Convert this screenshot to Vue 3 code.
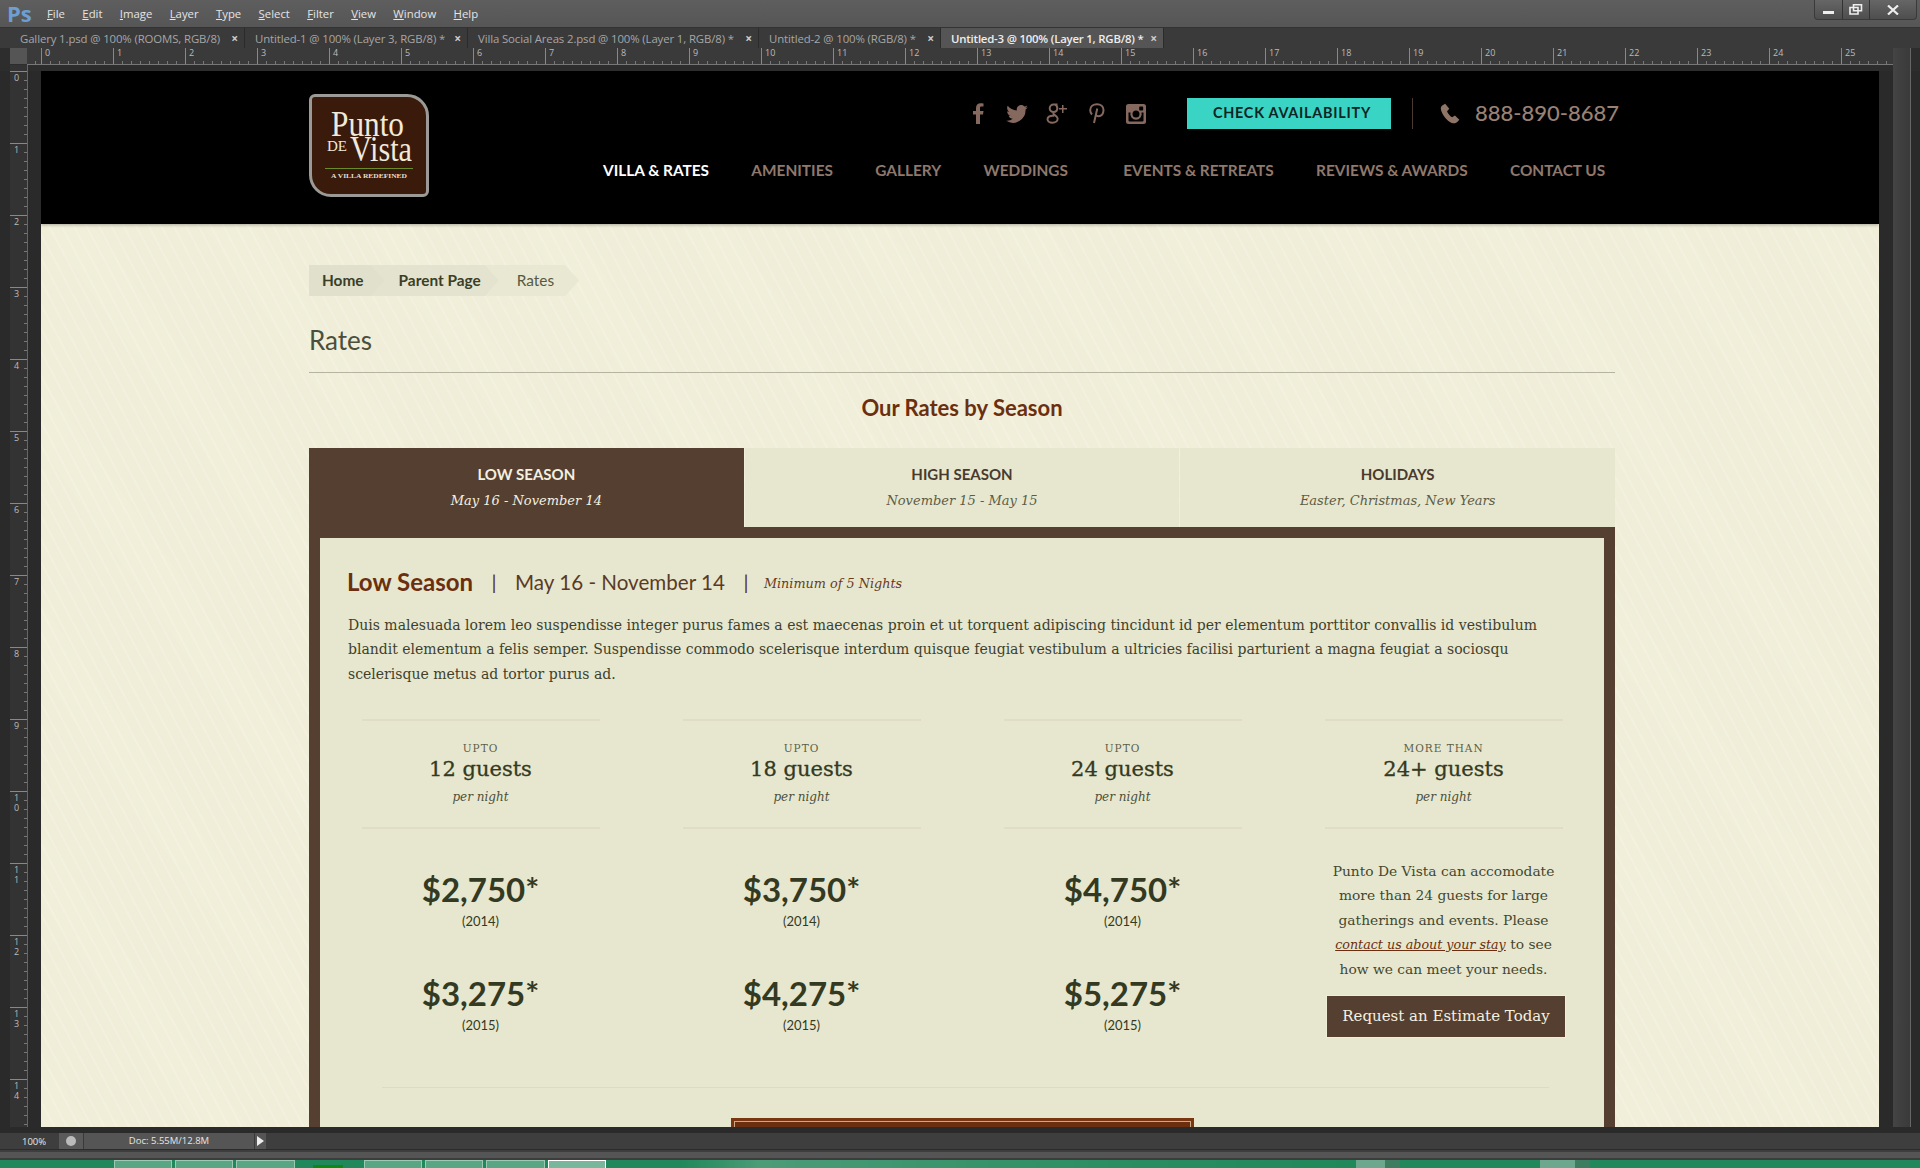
<script setup>
const menus = ['File', 'Edit', 'Image', 'Layer', 'Type', 'Select', 'Filter', 'View', 'Window', 'Help']
const docs = [
  { name: 'Gallery 1.psd @ 100% (ROOMS, RGB/8)', w: 235 },
  { name: 'Untitled-1 @ 100% (Layer 3, RGB/8) *', w: 223 },
  { name: 'Villa Social Areas 2.psd @ 100% (Layer 1, RGB/8) *', w: 291 },
  { name: 'Untitled-2 @ 100% (RGB/8) *', w: 182 },
  { name: 'Untitled-3 @ 100% (Layer 1, RGB/8) *', w: 223, active: true }
]
const hTicks = Array.from({ length: 26 }, (_, i) => String(i))
const vTicks = Array.from({ length: 15 }, (_, i) => String(i))

const nav = [
  { label: 'VILLA & RATES', active: true },
  { label: 'AMENITIES' },
  { label: 'GALLERY' },
  { label: 'WEDDINGS', wide: true },
  { label: 'EVENTS & RETREATS' },
  { label: 'REVIEWS & AWARDS' },
  { label: 'CONTACT US' }
]
const tabs = [
  { title: 'LOW SEASON', dates: 'May 16 - November 14', active: true },
  { title: 'HIGH SEASON', dates: 'November 15 - May 15' },
  { title: 'HOLIDAYS', dates: 'Easter, Christmas, New Years' }
]
const plans = [
  { pre: 'UPTO', guests: '12 guests', a: '$2,750*', b: '$3,275*' },
  { pre: 'UPTO', guests: '18 guests', a: '$3,750*', b: '$4,275*' },
  { pre: 'UPTO', guests: '24 guests', a: '$4,750*', b: '$5,275*' }
]
const taskButtons = [58, 58, 59, 0, 58, 58, 59, 58]
</script>

<template>
  <div class="ps">
    <div class="menubar">
      <span class="ps-logo">Ps</span>
      <nav class="menus">
        <span v-for="m in menus" :key="m"><u>{{ m[0] }}</u>{{ m.slice(1) }}</span>
      </nav>
      <div class="winbtns">
        <span class="wb wb-min"><i></i></span>
        <span class="wb wb-max">
          <svg width="14" height="11" viewBox="0 0 14 11"><path d="M4.500.8h8v6h-8zM1 3.500h8V10H1z" fill="none" stroke="#eee" stroke-width="1.600"/></svg>
        </span>
        <span class="wb wb-close">
          <svg width="12" height="10" viewBox="0 0 12 10"><path d="M1 .5l10 9M11 .5l-10 9" stroke="#eee" stroke-width="2.200"/></svg>
        </span>
      </div>
    </div>

    <div class="tabbar">
      <div v-for="d in docs" :key="d.name" class="doc" :class="{ active: d.active }" :style="{ width: d.w + 'px' }">
        <span>{{ d.name }}</span><b>×</b>
      </div>
    </div>

    <div class="rulerrow">
      <div class="corner"></div>
      <div class="hruler">
        <span class="hcell first"></span>
        <span v-for="t in hTicks" :key="t" class="hcell">{{ t }}</span>
      </div>
      <div class="scroll-top"></div>
    </div>

    <div class="workspace">
      <div class="vruler">
        <span v-for="t in vTicks" :key="t" class="vcell">
          <em v-for="c in t" :key="c">{{ c }}</em>
        </span>
      </div>
      <div class="canvas">
        <header class="site-head">
          <div class="wrap head-inner">
            <div class="logo">
              <svg width="114" height="97" viewBox="0 0 114 97">
                <text x="19" y="39" class="l-big" textLength="73" lengthAdjust="spacingAndGlyphs">Punto</text>
                <text x="15" y="54" class="l-de" textLength="20" lengthAdjust="spacingAndGlyphs">DE</text>
                <text x="38" y="64" class="l-big" textLength="62" lengthAdjust="spacingAndGlyphs">Vista</text>
                <rect x="13" y="71" width="88" height="1" fill="#6b8a2a" />
                <text x="19" y="81" class="l-tag" textLength="76" lengthAdjust="spacingAndGlyphs">A VILLA REDEFINED</text>
              </svg>
            </div>
            <div class="head-right">
              <div class="head-top">
                <div class="socials">
                  <svg width="11" height="21" viewBox="0 0 11 21"><path d="M3 21V11.500H0V8h3V5.200C3 2 4.800.3 7.600.3c1.200 0 2.400.1 2.900.2v3.100H8.600C7.200 3.600 7 4.300 7 5.300V8h3.500L10 11.500H7V21z" /></svg>
                  <svg class="tw" width="22" height="18" viewBox="0 0 24 20"><path d="M24 2.400c-.9.4-1.800.7-2.800.8 1-.6 1.800-1.600 2.200-2.700-1 .6-2 1-3.100 1.200A4.900 4.900 0 0 0 11.900 6.200C7.800 6 4.200 4 1.700.9c-1.300 2.200-.7 5.100 1.500 6.600-.8 0-1.600-.2-2.200-.6 0 2.400 1.700 4.500 3.900 5-.7.2-1.500.2-2.200.1.600 2 2.400 3.400 4.600 3.400A9.900 9.900 0 0 1 0 17.500 14 14 0 0 0 21.500 5c1-.7 1.800-1.600 2.500-2.600z" /></svg>
                  <svg width="22" height="22" viewBox="0 0 22 22"><path class="sk" d="M11.500 1.500H7.600C5.300 1.500 3.700 3.300 3.700 5.300c0 2.300 1.800 3.700 3.800 3.700 2.200 0 3.800-1.600 3.800-3.700 0-1.700-.9-3.300-2.300-3.800M8 9.200c-.9.800-.8 1.700.2 2.400 1.500 1 3.500 1.900 3.500 4 0 2.300-2.200 4.200-5.200 4.200C3.600 19.800 1.500 18.300 1.500 16.300c0-2.200 2.300-3.600 5-3.600.7 0 1.300 0 1.900.2" /><path d="M16 2h1.500v3H21v1.500h-3.500V10H16V6.500h-3V5h3z" /></svg>
                  <svg width="16" height="21" viewBox="0 0 16 21"><path class="sk" d="M3 11.500C1.800 10.300 1.200 9 1.200 7.300 1.200 3.600 4.200 1.200 8 1.200c3.700 0 6.500 2.400 6.500 5.900 0 3.600-2.100 6.100-4.900 6.100-1.500 0-2.600-.9-2.900-2M8.300 5.500 5 20" /></svg>
                  <svg width="20" height="20" viewBox="0 0 20 20"><path fill-rule="evenodd" d="M2.500 0h15A2.500 2.500 0 0 1 20 2.500v15a2.500 2.500 0 0 1-2.500 2.500h-15A2.500 2.500 0 0 1 0 17.500v-15A2.500 2.500 0 0 1 2.500 0zM14 2.500a.8.8 0 0 0-.8.8v2.400a.8.8 0 0 0 .8.8h2.400a.8.8 0 0 0 .8-.8V3.300a.8.8 0 0 0-.8-.8zM2.500 8.500v8a1 1 0 0 0 1 1h13a1 1 0 0 0 1-1v-8h-2a5.700 5.700 0 1 1-11 0zM10 6.500a3.500 3.500 0 1 0 0 7 3.500 3.500 0 0 0 0-7z" /></svg>
                </div>
                <span class="check">CHECK AVAILABILITY</span>
                <span class="vsep"></span>
                <svg class="phone" width="21" height="21" viewBox="0 0 19 19"><path d="M4.700.6 2 2.300C.6 3.300.4 5 1.100 7c1.500 4.300 5.400 9.300 9.500 11 1.800.7 3.800.5 5-.7l1.900-2.200-4-3.700-2.500 1.500C9 11.800 7 9.300 6.400 7.400l2-2.100z" /></svg>
                <span class="tel">888-890-8687</span>
              </div>
              <nav class="main-nav">
                <a v-for="n in nav" :key="n.label" :class="{ on: n.active, wide: n.wide }">{{ n.label }}</a>
              </nav>
            </div>
          </div>
        </header>

        <main class="wrap page">
          <ul class="crumbs">
            <li>Home</li>
            <li>Parent Page</li>
            <li class="cur">Rates</li>
          </ul>
          <h1>Rates</h1>
          <h2>Our Rates by Season</h2>

          <div class="tabs">
            <div v-for="t in tabs" :key="t.title" class="tab" :class="{ active: t.active }">
              <strong>{{ t.title }}</strong>
              <em>{{ t.dates }}</em>
            </div>
          </div>

          <section class="panel">
            <div class="panel-inner">
              <div class="panel-title">
                <strong>Low Season</strong>
                <span class="pipe">|</span>
                <span class="range">May 16 - November 14</span>
                <span class="pipe">|</span>
                <em>Minimum of 5 Nights</em>
              </div>
              <p class="intro">Duis malesuada lorem leo suspendisse integer purus fames a est maecenas proin et ut torquent adipiscing tincidunt id per elementum porttitor convallis id vestibulum blandit elementum a felis semper. Suspendisse commodo scelerisque interdum quisque feugiat vestibulum a ultricies facilisi parturient a magna feugiat a sociosqu scelerisque metus ad tortor purus ad.</p>

              <div class="plans">
                <div v-for="p in plans" :key="p.guests" class="plan">
                  <div class="plan-head">
                    <small>{{ p.pre }}</small>
                    <b>{{ p.guests }}</b>
                    <em>per night</em>
                  </div>
                  <div class="price">{{ p.a }}</div>
                  <div class="year">(2014)</div>
                  <div class="price second">{{ p.b }}</div>
                  <div class="year">(2015)</div>
                </div>
                <div class="plan">
                  <div class="plan-head">
                    <small>MORE THAN</small>
                    <b>24+ guests</b>
                    <em>per night</em>
                  </div>
                  <p class="more">Punto De Vista can accomodate more than 24 guests for large gatherings and events. Please <a>contact us about your stay</a> to see how we can meet your needs.</p>
                  <button class="estimate">Request an Estimate Today</button>
                </div>
              </div>

              <hr class="divider" />
              <div class="book-btn"></div>
            </div>
          </section>
        </main>
      </div>
      <div class="vgutter"></div>
      <div class="vscroll"></div>
    </div>

    <div class="gapbar"></div>
    <div class="statusbar">
      <span class="zoomval">100%</span>
      <span class="st-icon"><i></i></span>
      <span class="st-doc">Doc: 5.55M/12.8M</span>
      <span class="st-arrow"></span>
    </div>
    <div class="bottomline"></div>
    <div class="taskbar">
      <template v-for="(w, i) in taskButtons" :key="i">
        <span v-if="w" class="task" :class="{ active: i === 7 }" :style="{ width: w + 'px' }"></span>
        <span v-else class="task-gap"><i></i></span>
      </template>
    </div>
  </div>
</template>

<style>
html, body { margin: 0; background: #3c3c3c; }
</style>

<style scoped>
.ps {
  width: 1920px;
  height: 1168px;
  overflow: hidden;
  display: flex;
  flex-direction: column;
  background: #3c3c3c;
  font-family: "Open Sans", "Liberation Sans", sans-serif;
  color: #ddd;
}

/* photoshop chrome */
.menubar {
  height: 28px;
  flex: none;
  display: flex;
  background: linear-gradient(#5e5e5e, #565656);
  border-bottom: 1px solid #333;
  box-sizing: border-box;
}
.ps-logo {
  width: 47px;
  padding-left: 7px;
  box-sizing: border-box;
  color: #6d9fd3;
  font: 700 22px/26px "Open Sans", sans-serif;
}
.menus {
  display: flex;
  gap: 17.35px;
  font: 11.35px/28px "Open Sans", sans-serif;
  color: #e4e4e4;
}
.winbtns {
  margin-left: auto;
  margin-right: 3px;
  display: flex;
  height: 19px;
  border: 1px solid #3a3a3a;
  border-top: 0;
  border-radius: 0 0 4px 4px;
  background: linear-gradient(#666, #4e4e4e);
}
.wb {
  display: flex;
  align-items: center;
  justify-content: center;
  border-right: 1px solid #333;
  box-sizing: border-box;
}
.wb-min { width: 28px; }
.wb-min i { width: 11px; height: 3px; background: #eee; margin-top: 6px; }
.wb-max { width: 27px; }
.wb-close { width: 46px; border-right: 0; }

.tabbar {
  height: 20px;
  flex: none;
  display: flex;
  padding-left: 10px;
  background: #3a3a3a;
}
.doc {
  box-sizing: border-box;
  display: flex;
  justify-content: space-between;
  align-items: center;
  padding: 0 6px 0 10px;
  font-size: 11.4px;
  letter-spacing: -.12px;
  color: #a6a6a6;
  border-right: 1px solid #2b2b2b;
  white-space: nowrap;
}
.doc b { color: #ccc; font-size: 12px; font-weight: 700; }
.doc.active { background: #555; color: #eee; font-weight: 600; letter-spacing: -.2px; }

.rulerrow { height: 23px; flex: none; display: flex; background: #2d2d2d; }
.corner {
  margin-left: 10px;
  width: 17px;
  height: 16px;
  background: #555;
  flex: none;
}
.hruler {
  width: 1866px;
  height: 17px;
  flex: none;
  display: flex;
  overflow: hidden;
  background: #3a3a3a;
  border-bottom: 1px solid #777;
  box-sizing: border-box;
}
.hcell {
  width: 72px;
  flex: none;
  box-sizing: border-box;
  padding-left: 3px;
  font-size: 9px;
  line-height: 10px;
  color: #bbb;
  border-left: 1px solid #888;
  background: repeating-linear-gradient(90deg, transparent 0 8px, #777 8px 9px) left bottom / 100% 3px no-repeat;
}
.hcell.first { width: 14px; border: 0; padding: 0; }
.scroll-top { width: 17px; flex: none; background: linear-gradient(90deg, #444, #3a3a3a); }

.workspace {
  height: 1056px;
  flex: none;
  display: flex;
  background: #2a2a2a;
}
.vruler {
  margin-left: 10px;
  margin-top: -6px;
  width: 17px;
  margin-right: 13px;
  flex: none;
  background: #333;
  border-right: 1px solid #666;
  overflow: hidden;
  padding-top: 6px;
}
.vcell {
  height: 72px;
  box-sizing: border-box;
  display: flex;
  flex-direction: column;
  padding: 1px 0 0 4px;
  border-top: 1px solid #888;
  background: repeating-linear-gradient(180deg, transparent 0 8px, #777 8px 9px) right top / 3px 100% no-repeat;
}
.vcell em { font: 9px/10px "Open Sans", sans-serif; color: #bbb; }
.canvas {
  width: 1838px;
  flex: none;
  overflow: hidden;
  background-color: #f0eed8;
  background-image:
    repeating-linear-gradient(62deg, rgba(255,255,255,.16) 0 2px, transparent 2px 11px),
    repeating-linear-gradient(55deg, rgba(255,255,255,.06) 0 40px, transparent 40px 130px);
}
.vgutter { width: 14px; flex: none; }
.vscroll { width: 17px; flex: none; background: linear-gradient(90deg, #444, #3a3a3a); margin-top: -23px; border-right: 1px solid #666; }

.gapbar { height: 6px; flex: none; background: #2a2a2a; }
.statusbar {
  height: 16px;
  flex: none;
  display: flex;
  align-items: center;
  padding-left: 22px;
  background: #3e3e3e;
  font-size: 9.5px;
  color: #e6e6e6;
}
.zoomval { width: 37px; }
.st-icon {
  width: 24px;
  height: 16px;
  background: #5a5a5a;
  display: flex;
  align-items: center;
  justify-content: center;
}
.st-icon i { width: 10px; height: 10px; border-radius: 50%; background: #bbb; }
.st-doc {
  width: 171px;
  height: 16px;
  line-height: 16px;
  text-align: center;
  background: #555;
  border-left: 1px solid #3a3a3a;
  box-sizing: border-box;
}
.st-arrow {
  width: 12px;
  height: 16px;
  background: #555;
  border-left: 1px solid #3a3a3a;
  box-sizing: border-box;
  position: relative;
}
.st-arrow::after {
  content: "";
  position: absolute;
  left: 2px;
  top: 3px;
  border: 5px solid transparent;
  border-left: 7px solid #eee;
  border-right: 0;
}
.bottomline {
  height: 11px;
  flex: none;
  background: linear-gradient(#2b2b2b 0 1px, #3e3e3e 1px 3px, #555 3px 9px, #3c3c3c 9px);
}
.taskbar {
  height: 8px;
  flex: none;
  display: flex;
  padding-left: 114px;
  gap: 3px;
  background: linear-gradient(90deg,
    #20885a 0 680px, #4c9c78 760px, #2c8e63 1100px, #20885a 1356px,
    #6da88e 1356px 1385px, #3e7d5f 1385px 1400px, #20885a 1400px 1540px,
    #6da88e 1540px 1575px, #3e7d5f 1575px 1590px, #20885a 1590px);
}
.task {
  height: 8px;
  box-sizing: border-box;
  background: rgba(255,255,255,.25);
  border: 1px solid rgba(255,255,255,.4);
  border-bottom: 0;
}
.task.active { background: rgba(255,255,255,.4); border-color: #fff; }
.task-gap { width: 63px; padding: 5px 0 0 15px; box-sizing: border-box; }
.task-gap i { display: block; width: 30px; height: 3px; background: #0a8a10; }

/* the web page on the canvas */
.wrap { width: 1306px; margin-left: 268px; }
.site-head {
  height: 153px;
  background: #000;
  box-shadow: 0 1px 3px rgba(0,0,0,.3);
}
.head-inner { display: flex; }
.logo {
  margin: 23px 2px 0 0;
  width: 120px;
  height: 103px;
  flex: none;
  box-sizing: border-box;
  border: 3px solid #9c9a96;
  border-radius: 6px 22px 6px 22px;
  background: #3a1a0a;
}
.logo svg { display: block; }
.l-big { font: 36px "Liberation Serif", serif; fill: #f0eadb; }
.l-de { font: 14px "Liberation Serif", serif; fill: #f0eadb; }
.l-tag { font: 700 7px "Liberation Serif", serif; fill: #e5dfcf; }
.head-right { flex: 1; }
.head-top {
  margin-top: 27px;
  height: 31px;
  display: flex;
  align-items: center;
}
.socials {
  margin-left: 542px;
  display: flex;
  align-items: center;
  width: 214px;
  gap: 21px;
  flex: none;
  fill: #85695f;
}
.socials .tw { margin: 0 -3px 0 1px; }
.sk { fill: none; stroke: #85695f; stroke-width: 2; }
.check {
  width: 204px;
  height: 31px;
  flex: none;
  box-sizing: border-box;
  padding-left: 6px;
  background: #3ad4c4;
  color: #0d2523;
  text-align: center;
  font: 700 14.4px/30px Lato, sans-serif;
  letter-spacing: .75px;
}
.vsep { width: 1px; height: 31px; background: #4a3a32; margin: 0 27px 0 21px; flex: none; }
.phone { fill: #8f7468; flex: none; margin-right: 14px; }
.tel { font: 500 22px/29px Lato, sans-serif; color: #9a8174; white-space: nowrap; margin-bottom: 2px; }
.main-nav {
  margin-top: 32px;
  margin-left: 172px;
  display: flex;
  gap: 42.3px;
  font: 700 15.4px/18px Lato, sans-serif;
  color: #8f786c;
  white-space: nowrap;
}
.main-nav a.on { color: #fff; }
.main-nav a.wide { margin-right: 13px; }

.page { padding-top: 41px; font-family: "DejaVu Serif", serif; }
.crumbs {
  list-style: none;
  margin: 0;
  padding: 0;
  display: flex;
  height: 31px;
  font: 700 15.4px/31px Lato, sans-serif;
  color: #3a3f26;
}
.crumbs li {
  position: relative;
  margin-right: -14px;
  padding: 0 21px 0 13px;
  background: #e0e0cc;
  clip-path: polygon(0 0, calc(100% - 14px) 0, 100% 50%, calc(100% - 14px) 100%, 0 100%);
  z-index: 3;
}
.crumbs li:nth-child(2) { padding-left: 28px; padding-right: 18px; background: #e3e3d0; z-index: 2; }
.crumbs li.cur { padding-left: 32px; padding-right: 25px; background: #e8e8d3; font-weight: 400; color: #555a43; z-index: 1; }
h1 {
  margin: 26px 0 0;
  height: 50px;
  border-bottom: 1px solid #b4b4a0;
  font: 400 26px/36px Lato, sans-serif;
  color: #4b4f3b;
}
h2 {
  margin: 0;
  height: 75px;
  text-align: center;
  font: 700 22px/69px Lato, sans-serif;
  color: #6b2f0f;
}
.tabs { display: flex; height: 79px; gap: 1px; }
.tab {
  flex: 1;
  display: flex;
  flex-direction: column;
  align-items: center;
  background: #e7e7cf;
  color: #4a3a2e;
}
.tab strong { margin-top: 16px; font: 700 15px/20px Lato, sans-serif; }
.tab em { margin-top: 7px; font-size: 13px; line-height: 20px; font-style: italic; color: #5c5c46; }
.tab.active { background: #553f30; color: #f4f0e0; }
.tab.active em { color: #f4f0e0; }
.panel {
  background: #553f30;
  padding: 11px 11px 0;
  height: 700px;
}
.panel-inner {
  background: #e7e7cf;
  height: 100%;
  padding: 26px 0 0;
  box-sizing: border-box;
}
.panel-title {
  display: flex;
  align-items: center;
  height: 36px;
  margin-left: 27px;
  color: #5b3a25;
}
.panel-title strong { font: 700 24px/36px Lato, sans-serif; color: #6b2f0f; }
.panel-title .pipe { font: 400 20px/36px Lato, sans-serif; margin: 0 18.5px; color: #5b2f14; }
.panel-title .range { font: 400 20.6px/36px Lato, sans-serif; color: #5b3a25; }
.panel-title em { margin: 3px 0 0 -3px; font-size: 12.8px; color: #6b3a1c; }
.intro {
  margin: 13px 0 0 28px;
  width: 1200px;
  font-size: 14px;
  line-height: 24.4px;
  color: #3e412c;
}
.plans {
  margin: 33px 0 0 41.5px;
  display: grid;
  grid-template-columns: repeat(4, 238px);
  column-gap: 83px;
}
.plan { text-align: center; color: #343a22; }
.plan-head {
  height: 110px;
  box-sizing: border-box;
  border-top: 2px solid #e0dcc6;
  border-bottom: 2px solid #e0dcc6;
  display: flex;
  flex-direction: column;
  align-items: center;
  padding-top: 20px;
}
.plan-head small { font-size: 10.5px; line-height: 14px; letter-spacing: 1px; color: #5c5f48; }
.plan-head b { font-size: 21px; line-height: 28px; font-weight: 400; -webkit-text-stroke: .3px #343a22; }
.plan-head em { margin-top: 5px; font-size: 12px; line-height: 18px; color: #4c4f39; }
.price { margin-top: 38px; font: 700 33px/44px Lato, sans-serif; color: #343a22; }
.price.second { margin-top: 41px; }
.year { margin-top: 1px; font: 400 13px/18px Lato, sans-serif; color: #343a22; }
.more {
  margin: 30px 0 0;
  font-size: 13.8px;
  line-height: 24.2px;
  color: #44472f;
}
.more a { color: #6b2f0f; font-size: 12.7px; font-style: italic; text-decoration: underline; }
.estimate {
  display: block;
  margin: 15px 0 0 2.5px;
  width: 238px;
  height: 41px;
  border: 0;
  outline: 1px solid #f0eed8;
  background: #553f30;
  color: #f4f0e0;
  font: 15px/41px "DejaVu Serif", serif;
  padding: 0;
}
.divider {
  margin: 50px 0 0 62px;
  width: 1167px;
  height: 1px;
  border: 0;
  background: #e0d9c4;
}
.book-btn {
  margin: 30px 0 0 411px;
  width: 463px;
  height: 50px;
  box-sizing: border-box;
  background: #6b2f0f;
  box-shadow: inset 0 0 0 3px #7a3610, inset 0 0 0 4px #caa98a;
}
</style>
